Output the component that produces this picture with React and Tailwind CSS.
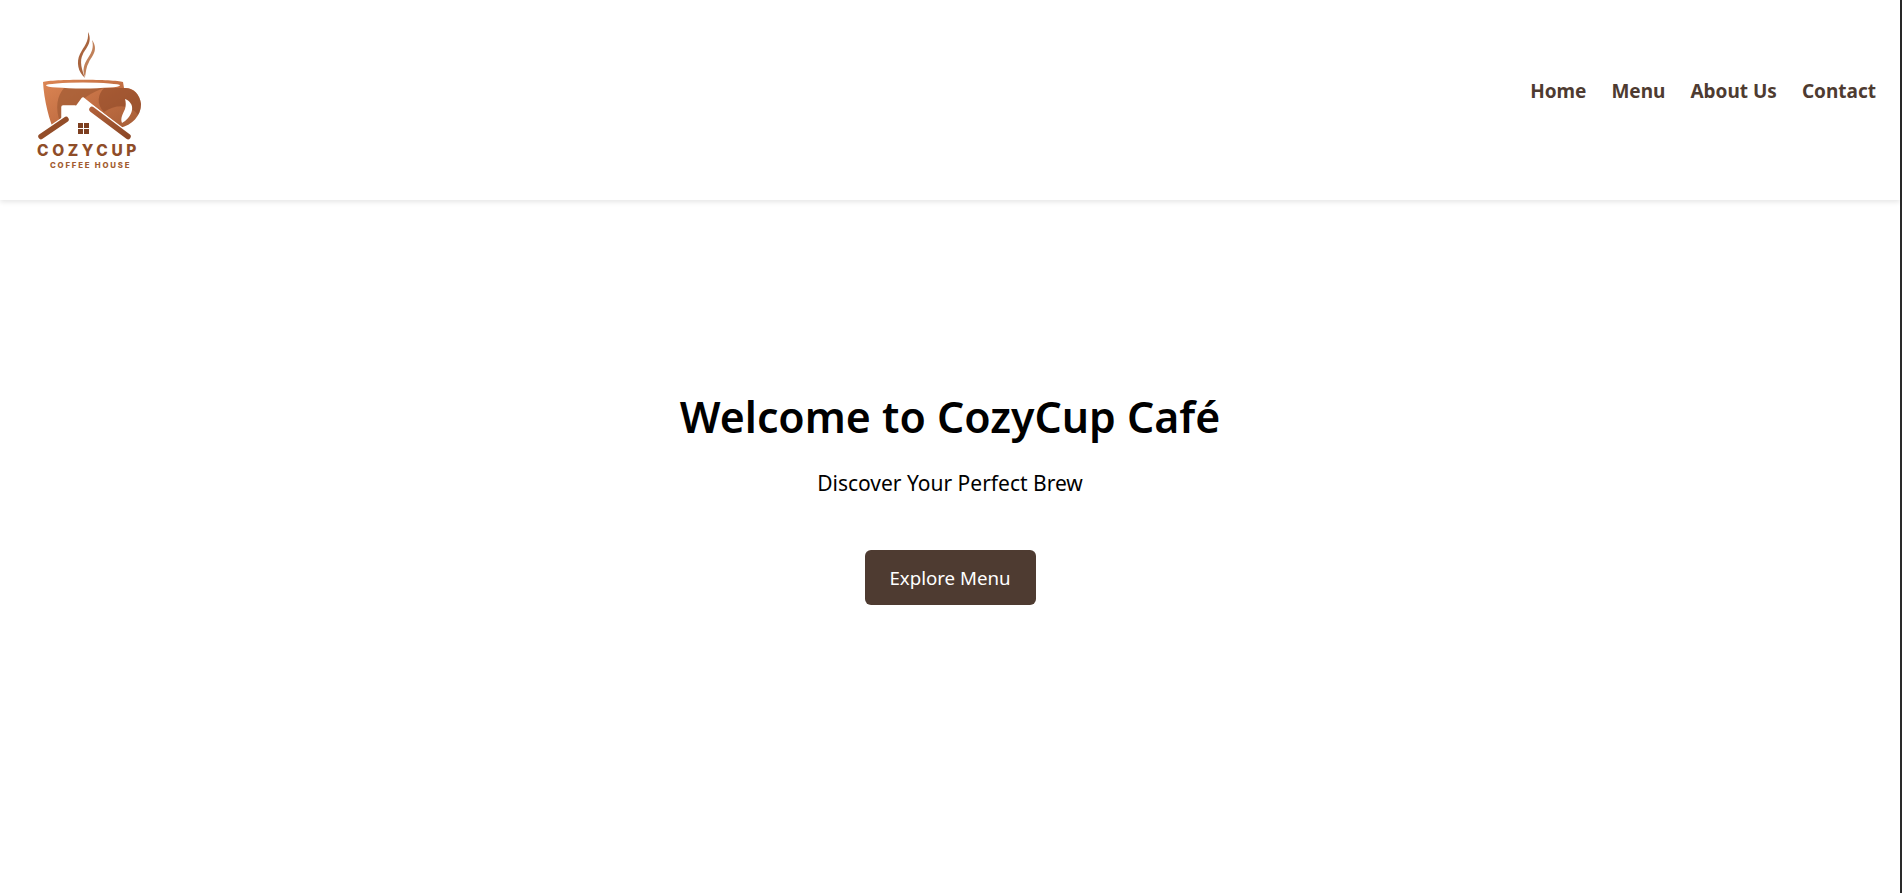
const navLinks = ["Home", "Menu", "About Us", "Contact"];

function Logo() {
  return (
    <svg width="130" height="160" viewBox="0 0 130 160" className="block">
      <defs>
        <linearGradient id="cup" x1="0" y1="0" x2="1" y2="1">
          <stop offset="0" stopColor="#dc8654" />
          <stop offset="0.5" stopColor="#c06d42" />
          <stop offset="1" stopColor="#a05a34" />
        </linearGradient>
        <linearGradient id="band" x1="0" y1="0" x2="1" y2="1">
          <stop offset="0" stopColor="#b0603a" />
          <stop offset="1" stopColor="#8c4826" />
        </linearGradient>
      </defs>
      {/* steam */}
      <path d="M68 12C73 22 66 28 63 34C59 41 62 50 65 58C58 52 56 42 60 34C64 26 69 22 68 12z" fill="#a9643e" />
      <path d="M72 20C79 30 72 36 69 42C66 47 66 52 65 57C62 50 64 44 68 38C72 32 74 27 72 20z" fill="#c08059" />
      {/* cup and handle */}
      <path d="M23 62C32 59 94 59 103 62L104 68C113 67 120 74 121 84C121 96 112 105 100 108L86 116H36C29 100 24 80 23 62z" fill="url(#cup)" />
      {/* darker swirls on the cup */}
      <path d="M44 68C58 66 72 67 84 68C72 72 60 80 52 90L40 102C35 88 37 76 44 68z" fill="#a05a33" opacity="0.7" />
      <path d="M84 68H104C113 68 120 74 121 84C121 88 120 92 118 95C110 84 96 84 84 92C76 84 78 74 84 68z" fill="#8f4a28" opacity="0.6" />
      {/* handle opening */}
      <path d="M105 79C110 81 113 85 112 90C111 96 106 101 102 103C100 98 103 94 105 89C106 86 106 82 105 79z" fill="#fff" />
      {/* rim */}
      <ellipse cx="63" cy="65.5" rx="37" ry="3" fill="#fff" />
      {/* house, white below the roof line */}
      <path d="M24 118L43 103V88H55V91L63 80L104 116V124H24z" fill="#fff" />
      <path d="M21 115L43 100V87H55V90L63 79L108 115" fill="none" stroke="#fff" strokeWidth="3.5" strokeLinejoin="round" strokeLinecap="round" />
      <path d="M21 116.5L46 99.5" fill="none" stroke="#fff" strokeWidth="8" strokeLinecap="round" />
      <path d="M72 89.5L108 116.5" fill="none" stroke="#fff" strokeWidth="8" strokeLinecap="round" />
      <path d="M21 116.5L46 99.5" fill="none" stroke="#934d29" strokeWidth="5.5" strokeLinecap="round" />
      <path d="M72 89.5L108 116.5" fill="none" stroke="url(#band)" strokeWidth="5.5" strokeLinecap="round" />
      {/* window */}
      <g fill="#7d3f20">
        <rect x="58" y="103" width="5" height="5" />
        <rect x="64" y="103" width="5" height="5" />
        <rect x="58" y="109" width="5" height="5" />
        <rect x="64" y="109" width="5" height="5" />
      </g>
      <text x="17" y="136" fontFamily="Inter, sans-serif" fontWeight="800" fontSize="15.5" letterSpacing="3.6" fill="#8f4d28">COZYCUP</text>
      <text x="30" y="148" fontFamily="Inter, sans-serif" fontWeight="800" fontSize="7.8" letterSpacing="1.8" fill="#a35c30">COFFEE HOUSE</text>
    </svg>
  );
}

export default function App() {
  return (
    <div className="min-h-[893px] bg-white font-['Noto_Sans',sans-serif] border-r-2 border-[#2a2a2a]">
      <header className="h-[200px] flex justify-between items-start pl-5 pr-[24px] bg-white shadow-[0_2px_5px_rgba(0,0,0,0.1)]">
        <div className="pt-5">
          <Logo />
        </div>
        <nav className="flex gap-[25px] pt-[77px]">
          {navLinks.map((link) => (
            <a key={link} href="#" className="text-[19px] leading-7 font-bold text-[#4e3b31]">
              {link}
            </a>
          ))}
        </nav>
      </header>
      <section className="flex flex-col items-center pt-[187px] text-black">
        <h1 className="text-[42.8px] leading-[60px] font-semibold">Welcome to CozyCup Café</h1>
        <p className="mt-[20px] text-[21px] leading-8">Discover Your Perfect Brew</p>
        <a href="#" className="mt-[51px] pt-0.5 w-[171px] h-[55px] flex items-center justify-center rounded-md bg-[#4e3b31] text-white text-[18.7px]">
          Explore Menu
        </a>
      </section>
    </div>
  );
}
